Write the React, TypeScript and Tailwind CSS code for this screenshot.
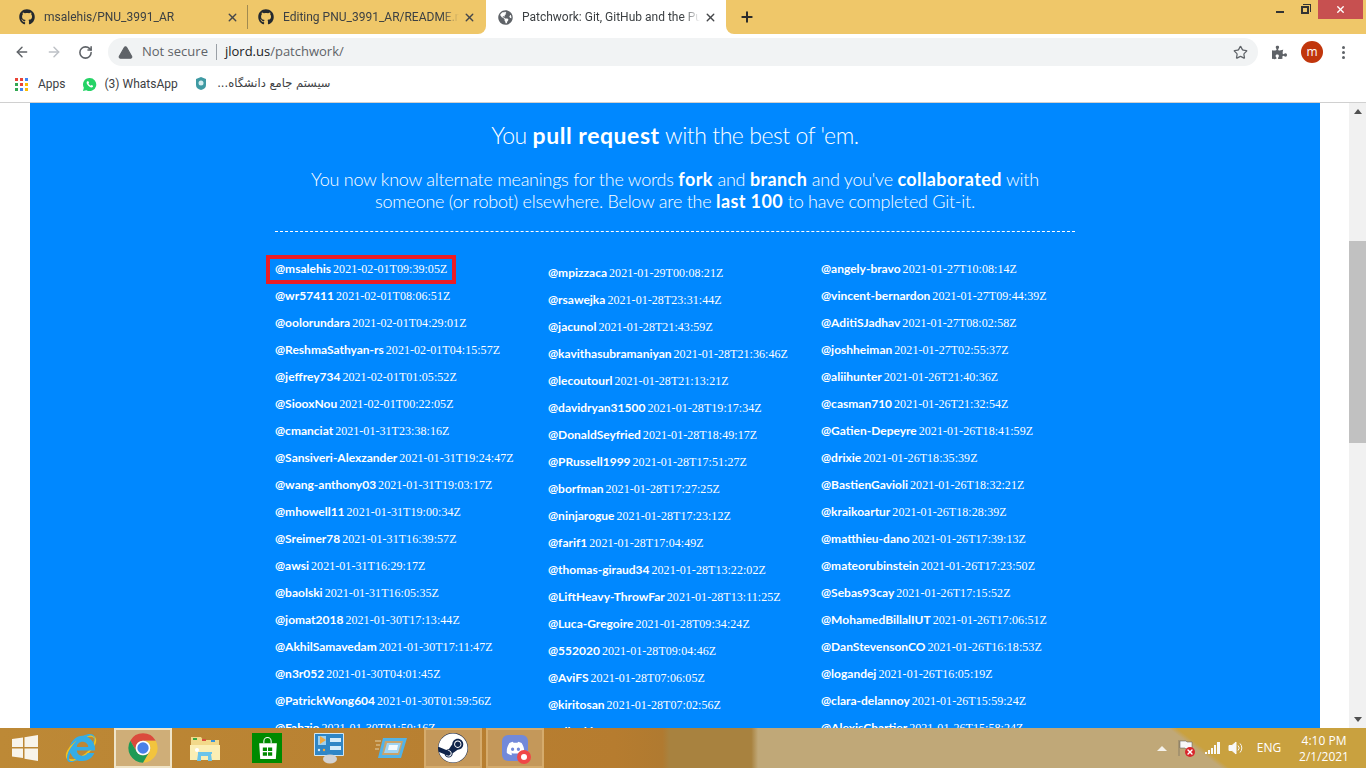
import { ArrowLeft, ArrowRight, RotateCw, Star, X, Plus, TriangleAlert } from "lucide-react"
import { FaDiscord, FaGithub, FaGlobeAmericas, FaInternetExplorer, FaPuzzlePiece, FaSteam } from "react-icons/fa"
import type { ReactNode } from "react"

const col1 = [
  ["@msalehis", "2021-02-01T09:39:05Z"],
  ["@wr57411", "2021-02-01T08:06:51Z"],
  ["@oolorundara", "2021-02-01T04:29:01Z"],
  ["@ReshmaSathyan-rs", "2021-02-01T04:15:57Z"],
  ["@jeffrey734", "2021-02-01T01:05:52Z"],
  ["@SiooxNou", "2021-02-01T00:22:05Z"],
  ["@cmanciat", "2021-01-31T23:38:16Z"],
  ["@Sansiveri-Alexzander", "2021-01-31T19:24:47Z"],
  ["@wang-anthony03", "2021-01-31T19:03:17Z"],
  ["@mhowell11", "2021-01-31T19:00:34Z"],
  ["@Sreimer78", "2021-01-31T16:39:57Z"],
  ["@awsi", "2021-01-31T16:29:17Z"],
  ["@baolski", "2021-01-31T16:05:35Z"],
  ["@jomat2018", "2021-01-30T17:13:44Z"],
  ["@AkhilSamavedam", "2021-01-30T17:11:47Z"],
  ["@n3r052", "2021-01-30T04:01:45Z"],
  ["@PatrickWong604", "2021-01-30T01:59:56Z"],
  ["@Fabzio", "2021-01-30T01:50:16Z"],
]

const col2 = [
  ["@mpizzaca", "2021-01-29T00:08:21Z"],
  ["@rsawejka", "2021-01-28T23:31:44Z"],
  ["@jacunol", "2021-01-28T21:43:59Z"],
  ["@kavithasubramaniyan", "2021-01-28T21:36:46Z"],
  ["@lecoutourl", "2021-01-28T21:13:21Z"],
  ["@davidryan31500", "2021-01-28T19:17:34Z"],
  ["@DonaldSeyfried", "2021-01-28T18:49:17Z"],
  ["@PRussell1999", "2021-01-28T17:51:27Z"],
  ["@borfman", "2021-01-28T17:27:25Z"],
  ["@ninjarogue", "2021-01-28T17:23:12Z"],
  ["@farif1", "2021-01-28T17:04:49Z"],
  ["@thomas-giraud34", "2021-01-28T13:22:02Z"],
  ["@LiftHeavy-ThrowFar", "2021-01-28T13:11:25Z"],
  ["@Luca-Gregoire", "2021-01-28T09:34:24Z"],
  ["@552020", "2021-01-28T09:04:46Z"],
  ["@AviFS", "2021-01-28T07:06:05Z"],
  ["@kiritosan", "2021-01-28T07:02:56Z"],
  ["@ellenkim", "2021-01-28T02:04:48Z"],
]

const col3 = [
  ["@angely-bravo", "2021-01-27T10:08:14Z"],
  ["@vincent-bernardon", "2021-01-27T09:44:39Z"],
  ["@AditiSJadhav", "2021-01-27T08:02:58Z"],
  ["@joshheiman", "2021-01-27T02:55:37Z"],
  ["@aliihunter", "2021-01-26T21:40:36Z"],
  ["@casman710", "2021-01-26T21:32:54Z"],
  ["@Gatien-Depeyre", "2021-01-26T18:41:59Z"],
  ["@drixie", "2021-01-26T18:35:39Z"],
  ["@BastienGavioli", "2021-01-26T18:32:21Z"],
  ["@kraikoartur", "2021-01-26T18:28:39Z"],
  ["@matthieu-dano", "2021-01-26T17:39:13Z"],
  ["@mateorubinstein", "2021-01-26T17:23:50Z"],
  ["@Sebas93cay", "2021-01-26T17:15:52Z"],
  ["@MohamedBillalIUT", "2021-01-26T17:06:51Z"],
  ["@DanStevensonCO", "2021-01-26T16:18:53Z"],
  ["@logandej", "2021-01-26T16:05:19Z"],
  ["@clara-delannoy", "2021-01-26T15:59:24Z"],
  ["@AlexisChartier", "2021-01-26T15:58:24Z"],
]

const Row = ({ name, date, marked }: { name: string; date: string; marked?: boolean }) => (
  <li className="relative flex h-[27px] items-center gap-[2px] whitespace-nowrap text-white">
    <span className="font-['Lato',sans-serif] text-[12px] font-bold">{name}</span>
    <span className="font-['Liberation_Serif',serif] text-[12px] tracking-[0.05px]">{date}</span>
    {marked && <span className="absolute -left-[9px] top-0 h-[29px] w-[190px] border-4 border-[#ed1c24]" />}
  </li>
)

const Tab = ({ title, className, active }: { title: string; className: string; active?: boolean }) => (
  <div className={`flex h-[34px] shrink-0 items-center ${className}`}>
    {active ? (
      <FaGlobeAmericas className="h-[15px] w-[15px] shrink-0 text-[#5f6368]" />
    ) : (
      <FaGithub className="h-[16px] w-[16px] shrink-0 text-[#24292e]" />
    )}
    <span className="ml-[9px] min-w-0 flex-1 overflow-hidden whitespace-nowrap font-['Roboto',sans-serif] text-[12px] text-[#3c4043] [mask-image:linear-gradient(90deg,#000_90%,transparent)]">
      {title}
    </span>
    <X className="ml-[4px] h-[13px] w-[13px] shrink-0 text-[#45474a]" strokeWidth={2.5} />
  </div>
)

const ChromeLogo = () => (
  <svg viewBox="0 0 48 48" className="h-[32px] w-[32px]">
    <path d="M24 2A22 22 0 0 1 43.050 13H24A11 11 0 0 0 14.470 29.500L4.950 13A22 22 0 0 1 24 2Z" fill="#db4a3c" />
    <path d="M43.050 13A22 22 0 0 1 24 46L33.530 29.500A11 11 0 0 0 24 13Z" fill="#f2c43d" />
    <path d="M24 46A22 22 0 0 1 4.950 13L14.470 29.500A11 11 0 0 0 33.530 29.500Z" fill="#1f9a55" />
    <circle cx="24" cy="24" r="11" fill="#fff" />
    <circle cx="24" cy="24" r="8.500" fill="#4a80e8" />
  </svg>
)

const IeLogo = () => (
  <span className="relative flex h-[34px] w-[34px] items-center justify-center">
    <svg viewBox="0 0 34 34" className="absolute left-0 top-0 h-[34px] w-[34px]" fill="none">
      <ellipse cx="17" cy="17" rx="17" ry="8" transform="rotate(-38 17 17)" stroke="#f3c21c" strokeWidth="1.800" />
    </svg>
    <FaInternetExplorer className="relative h-[28px] w-[28px] text-[#35ade6]" />
  </span>
)

const WhatsappLogo = () => (
  <svg viewBox="0 0 16 16" className="ml-[16px] h-[15px] w-[15px]">
    <path d="M8 1a7 7 0 0 0-6 10.500L1 15l3.600-1A7 7 0 1 0 8 1z" fill="#25d366" />
    <path
      d="M5.500 4.500c-.5.500-.8 1.500-.3 2.800.7 1.700 2 3 3.700 3.700 1.300.4 2.200 0 2.700-.6l.2-1-1.700-.9-.8.8c-1-.4-1.900-1.300-2.400-2.300l.7-.8-.8-1.800z"
      fill="#fff"
    />
  </svg>
)

const FolderIcon = () => (
  <svg viewBox="0 0 32 32" className="h-[32px] w-[32px]">
    <path d="M2 5h10l2 3h16v17H2z" fill="#f2d98a" />
    <rect x="4" y="6" width="4" height="2" fill="#39a845" />
    <rect x="13" y="7" width="4" height="2" fill="#d9503f" />
    <rect x="22" y="8" width="4" height="2" fill="#3a93d8" />
    <path d="M1 13h30v15H1z" fill="#fbeeb4" />
    <path d="M9 20h14v2h-1l1 7h-4v-5h-7v5H8l1-7z" fill="#6cc4ea" />
    <circle cx="8" cy="18" r="2" fill="#fff" />
  </svg>
)

const StoreIcon = () => (
  <span className="flex h-[30px] w-[30px] items-center justify-center bg-[#008a00]">
    <svg viewBox="0 0 24 24" className="h-[25px] w-[25px]" fill="#fff">
      <path d="M8 7V5a4 4 0 0 1 8 0v2h-1V5a3 3 0 0 0-6 0v2z" />
      <path d="M4 7h17l-1 15H5zM7.500 11v3.500h4V11zM12.500 11v3.500h4V11zM7.500 15.500V19h4v-3.500zM12.500 15.500V19h4v-3.500z" fillRule="evenodd" />
    </svg>
  </span>
)

const ControlPanelIcon = () => (
  <svg viewBox="0 0 32 32" className="h-[32px] w-[32px]">
    <rect x="1" y="1" width="30" height="23" rx="1" fill="#cfe6f5" />
    <rect x="2" y="2" width="28" height="21" fill="#2f86c6" />
    <path d="M5 4h8v9H5z" fill="#9fd0ee" />
    <path d="M7 4l6 4-6 4z" fill="#f3a93d" />
    <rect x="17" y="6" width="11" height="4" fill="#d5ecfa" />
    <rect x="17" y="14" width="11" height="4" fill="#d5ecfa" />
    <circle cx="6" cy="18" r="1.200" fill="#d5ecfa" />
    <circle cx="11" cy="18" r="1.200" fill="#f3a93d" />
    <ellipse cx="17" cy="27" rx="7" ry="4.500" fill="#d2d2d2" />
  </svg>
)

const DisplayIcon = () => (
  <svg viewBox="0 0 32 32" className="h-[32px] w-[32px]">
    <path d="M0 9h6M1 13h4M0 17h4" stroke="#e3d2a8" strokeWidth="1.200" />
    <path d="M8 6h24l-6 20H3z" fill="#54b3e6" />
    <path d="M10 9h18l-4 14H7z" fill="#c9a46b" />
    <path d="M12 11h14l-3 10H9z" fill="#9fd3f2" />
    <path d="M14 13h9l-1 5h-9z" fill="#f3f9fd" />
  </svg>
)

const WinButton = ({ children, lit }: { children: ReactNode; lit?: "strong" | "soft" }) => {
  if (lit)
    return (
      <div
        className={`mx-[2px] flex h-[40px] w-[58px] items-center justify-center border-2 ${
          lit === "strong" ? "border-[#efe4c8] bg-[#cfae78]" : "border-[#d5ab6c] bg-[#c4985a]"
        }`}
      >
        {children}
      </div>
    )
  return <div className="flex h-[40px] w-[62px] items-center justify-center">{children}</div>
}

export default function App() {
  return (
    <div className="flex h-screen w-full flex-col overflow-hidden bg-white font-['Open_Sans',sans-serif]">
      {/* tab strip */}
      <div className="flex h-[34px] shrink-0 bg-white">
        <div className="flex h-full rounded-br-[8px] bg-[#efc769]">
          <Tab title="msalehis/PNU_3991_AR" className="w-[247px] pl-[19px] pr-[8px]" />
          <div className="my-[5px] w-px bg-[#a08a50]" />
          <Tab title="Editing PNU_3991_AR/README.md" className="w-[238px] pl-[10px] pr-[10px]" />
        </div>
        <Tab title="Patchwork: Git, GitHub and the Pull" className="w-[240px] pl-[12px] pr-[9px]" active />
        <div className="flex h-full flex-1 items-start justify-between rounded-bl-[8px] bg-[#efc769]">
          <Plus className="ml-[13px] mt-[9px] h-[16px] w-[16px] text-[#2b2b2b]" strokeWidth={3} />
          <div className="flex items-start pr-[3px]">
            <span className="mt-[11px] h-[2px] w-[8px] bg-[#333]" />
            <span className="relative ml-[17px] mr-[9px] mt-[6px] h-[8px] w-[8px] border-2 border-[#333]">
              <span className="absolute -right-[4px] -top-[4px] h-[8px] w-[8px] border-r border-t border-[#333]" />
            </span>
            <span className="flex h-[19px] w-[45px] items-center justify-center bg-[#c75050]">
              <X className="h-[11px] w-[11px] text-white" strokeWidth={3} />
            </span>
          </div>
        </div>
      </div>

      {/* toolbar */}
      <div className="mt-[2px] flex h-[32px] shrink-0 items-center pl-[14px] pr-[21px]">
        <ArrowLeft className="h-[16px] w-[16px] text-[#5f6368]" strokeWidth={2.2} />
        <ArrowRight className="ml-[16px] h-[16px] w-[16px] text-[#bdc1c6]" strokeWidth={2.2} />
        <RotateCw className="ml-[16px] h-[15px] w-[15px] text-[#5f6368]" strokeWidth={2.5} />
        <div className="ml-[15px] flex h-[28px] flex-1 items-center rounded-full bg-[#f1f3f4] pl-[10px] pr-[10px] text-[13px]">
          <TriangleAlert className="h-[15px] w-[15px] fill-[#5f6368] text-[#5f6368]" />
          <span className="ml-[9px] text-[#5f6368]">Not secure</span>
          <span className="mx-[8px] h-[16px] w-px bg-[#9aa0a6]" />
          <span className="text-[#202124]">jlord.us</span>
          <span className="text-[#5f6368]">/patchwork/</span>
          <Star className="ml-auto h-[15px] w-[15px] text-[#5f6368]" strokeWidth={2} />
        </div>
        <FaPuzzlePiece className="ml-[14px] h-[15px] w-[15px] text-[#5f6368]" />
        <span className="ml-[14px] flex h-[22px] w-[22px] items-center justify-center rounded-full bg-[#c1360c] text-[12px] text-white">
          m
        </span>
        <span className="ml-[19px] flex flex-col gap-[2px]">
          <i className="h-[3px] w-[3px] rounded-full bg-[#5f6368]" />
          <i className="h-[3px] w-[3px] rounded-full bg-[#5f6368]" />
          <i className="h-[3px] w-[3px] rounded-full bg-[#5f6368]" />
        </span>
      </div>

      {/* bookmarks */}
      <div className="flex h-[35px] shrink-0 items-center border-b border-[#d0d0d0] pb-[2px] pl-[15px] font-['Roboto',sans-serif] text-[12px] text-[#3c4043]">
        <span className="grid h-[13px] w-[13px] grid-cols-3 gap-[2px]">
          <i className="bg-[#ea4335]" />
          <i className="bg-[#ea4335]" />
          <i className="bg-[#4285f4]" />
          <i className="bg-[#34a853]" />
          <i className="bg-[#ea4335]" />
          <i className="bg-[#fbbc05]" />
          <i className="bg-[#34a853]" />
          <i className="bg-[#4285f4]" />
          <i className="bg-[#fbbc05]" />
        </span>
        <span className="ml-[10px]">Apps</span>
        <WhatsappLogo />
        <span className="ml-[8px] w-[72px] whitespace-nowrap">(3) WhatsApp</span>
        <svg viewBox="0 0 12 14" className="ml-[18px] h-[14px] w-[12px]">
          <path d="M6 0l5 2v6c0 3-2 4-5 5-3-1-5-2-5-5V2z" fill="#3f9aa3" />
          <circle cx="6" cy="6" r="2.500" fill="#d6eef0" />
        </svg>
        <span dir="rtl" className="ml-[12px] w-[112px] whitespace-nowrap font-['DejaVu_Sans',sans-serif] text-[11.5px]">
          سیستم جامع دانشگاه...
        </span>
      </div>

      {/* page */}
      <div className="flex min-h-0 flex-1 overflow-hidden">
        <div className="min-w-0 flex-1 overflow-hidden pl-[30px] pr-[29px]">
          <main className="h-full bg-[#0088ff] pt-[15px]">
            <div className="mx-auto w-[800px] text-center text-white">
              <h2 className="font-['Lato',sans-serif] text-[23px] font-light leading-[34px] tracking-[-0.45px]">
                You <strong className="font-bold tracking-[0.55px]">pull request</strong> with the best of 'em.
              </h2>
              <p className="-mx-[20px] mt-[16px] font-['Lato',sans-serif] text-[18px] font-light leading-[22px] tracking-[-0.25px]">
                You now know alternate meanings for the words <strong className="font-bold tracking-[0.4px]">fork</strong> and{" "}
                <strong className="font-bold tracking-[0.4px]">branch</strong> and you've{" "}
                <strong className="font-bold tracking-[0.4px]">collaborated</strong> with
                <br />
                someone (or robot) elsewhere. Below are the <strong className="font-bold tracking-[0.4px]">last 100</strong> to have completed Git-it.
              </p>
              <div className="mt-[19px] border-t border-dashed border-white" />
            </div>
            <div className="mx-auto mt-[23px] grid w-[800px] grid-cols-[273px_273px_254px]">
              <ul>
                {col1.map(([name, date], i) => (
                  <Row key={name} name={name} date={date} marked={i === 0} />
                ))}
              </ul>
              <ul className="pt-[4px]">
                {col2.map(([name, date]) => (
                  <Row key={name} name={name} date={date} />
                ))}
              </ul>
              <ul>
                {col3.map(([name, date]) => (
                  <Row key={name} name={name} date={date} />
                ))}
              </ul>
            </div>
          </main>
        </div>
        {/* scrollbar */}
        <div className="flex w-[17px] shrink-0 flex-col bg-[#f1f1f1]">
          <div className="flex h-[17px] items-center justify-center">
            <span className="h-0 w-0 border-x-[4px] border-b-[5px] border-x-transparent border-b-[#505050]" />
          </div>
          <div className="mt-[121px] h-[202px] bg-[#c1c1c1]" />
          <div className="mt-auto flex h-[17px] items-center justify-center">
            <span className="h-0 w-0 border-x-[4px] border-t-[5px] border-x-transparent border-t-[#505050]" />
          </div>
        </div>
      </div>

      {/* taskbar */}
      <footer className="flex h-[40px] shrink-0 items-center bg-[linear-gradient(37deg,transparent_735px,#c9a13f_740px),linear-gradient(90deg,#bd8936_0%,#b67c2f_45%,#b07a30_48.5%,#a8823f_49%,#a8823f_55%,#c0a878_55.5%,#c0a878_100%)] text-white">
        <div className="flex w-[50px] items-center justify-center">
          <svg viewBox="0 0 26 26" className="h-[26px] w-[26px]" fill="#f8f4ea">
            <path d="M0 4l11-1.500V12H0zM12.500 2.300L26 0v12H12.500zM0 13.500h11V23L0 21.500zM12.500 13.500H26V26l-13.500-2.300z" />
          </svg>
        </div>
        <WinButton>
          <IeLogo />
        </WinButton>
        <WinButton lit="strong">
          <ChromeLogo />
        </WinButton>
        <WinButton>
          <FolderIcon />
        </WinButton>
        <WinButton>
          <StoreIcon />
        </WinButton>
        <WinButton>
          <ControlPanelIcon />
        </WinButton>
        <WinButton>
          <DisplayIcon />
        </WinButton>
        <WinButton lit="soft">
          <span className="flex h-[30px] w-[30px] items-center justify-center rounded-full bg-[#10244a]">
            <FaSteam className="h-[30px] w-[30px] text-white" />
          </span>
        </WinButton>
        <WinButton lit="soft">
          <span className="relative flex h-[26px] w-[26px] items-center justify-center rounded-[6px] bg-[#7289da]">
            <FaDiscord className="h-[19px] w-[19px] text-white" />
            <span className="absolute -bottom-[3px] -right-[3px] flex h-[14px] w-[14px] items-center justify-center rounded-full bg-[#f04747]">
              <i className="h-[6px] w-[6px] rounded-full bg-white" />
            </span>
          </span>
        </WinButton>

        <div className="ml-auto flex h-full items-center">
          <span className="h-0 w-0 border-x-[5px] border-b-[5px] border-x-transparent border-b-[#f4f1ea]" />
          <span className="relative ml-[11px] h-[16px] w-[15px]">
            <svg viewBox="0 0 15 16" className="h-[16px] w-[15px]">
              <path d="M1 0v16M2 1h6l1 1h5v7H8L7 8H2z" fill="#f8f8f8" stroke="#555" strokeWidth="0.5" />
            </svg>
            <span className="absolute -bottom-[1px] -right-[2px] flex h-[10px] w-[10px] items-center justify-center rounded-full bg-[#d9262c]">
              <X className="h-[8px] w-[8px] text-white" strokeWidth={4} />
            </span>
          </span>
          <svg viewBox="0 0 16 12" className="ml-[12px] h-[12px] w-[16px]" fill="#f8f8f8">
            <path d="M0 10h2v2H0zM3 8h2v4H3zM6 6h2v6H6zM9 3h2v9H9zM12 0h3v12h-3z" />
          </svg>
          <svg viewBox="0 0 16 14" className="ml-[7px] h-[14px] w-[16px]" fill="none" stroke="#f8f8f8">
            <path d="M1 4.500h3L8 1v12L4 9.500H1z" fill="#f8f8f8" />
            <path d="M10 4.500a3.500 3.500 0 0 1 0 5M12 2.500a6.500 6.500 0 0 1 0 9" />
          </svg>
          <span className="ml-[9px] w-[32px] text-center text-[12px]">ENG</span>
          <div className="ml-[14px] mr-[17px] mt-[2px] w-[50px] text-center text-[12px] leading-[16px]">
            <div>4:10 PM</div>
            <div>2/1/2021</div>
          </div>
        </div>
      </footer>
    </div>
  )
}
